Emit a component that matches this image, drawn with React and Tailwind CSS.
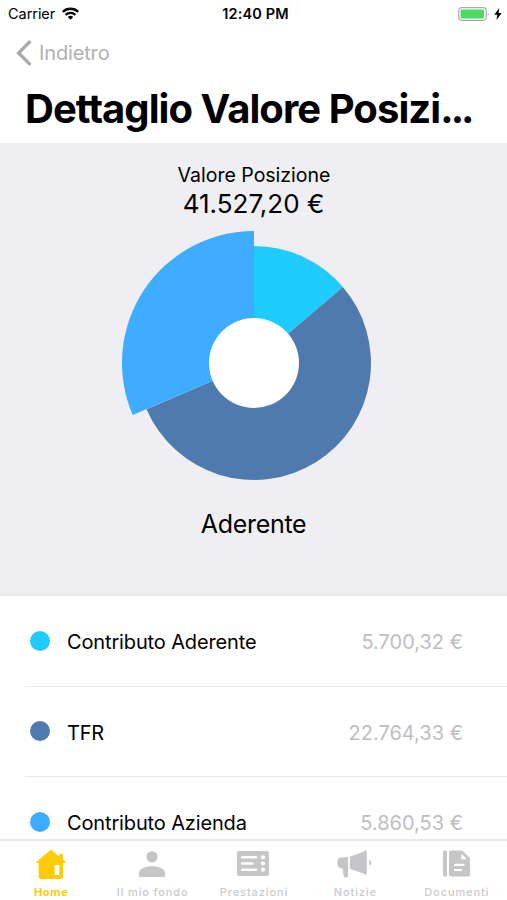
const CENTER = { x: 133, y: 133 };
const HOLE_RADIUS = 45;

const SLICES = [
  { id: 'aderente', color: '#1fcbff', value: 5700.32, radius: 117 },
  { id: 'tfr', color: '#4f7aad', value: 22764.33, radius: 117 },
  { id: 'azienda', color: '#3eacff', value: 13062.55, radius: 132 },
];

const ROWS = [
  { label: 'Contributo Aderente', amount: '5.700,32 €', dot: 'bg-[#1fcbff]', text: 'tracking-[-0.14px]' },
  { label: 'TFR', amount: '22.764,33 €', dot: 'bg-[#4f7aad]', text: 'tracking-[-0.2px]' },
  { label: 'Contributo Azienda', amount: '5.860,53 €', dot: 'bg-[#3eacff]', text: 'tracking-[-0.14px]' },
];

function slicePath(start, end, radius) {
  const point = (angle) =>
    `${CENTER.x + radius * Math.sin(angle)} ${CENTER.y - radius * Math.cos(angle)}`;
  const large = end - start > Math.PI ? 1 : 0;
  return `M${CENTER.x} ${CENTER.y}L${point(start)}A${radius} ${radius} 0 ${large} 1 ${point(end)}Z`;
}

function DonutChart() {
  const total = SLICES.reduce((sum, s) => sum + s.value, 0);
  let angle = 0;

  return (
    <svg width="266" height="266" viewBox="0 0 266 266" className="ml-[121px] block">
      {SLICES.map((slice) => {
        const start = angle;
        angle += (slice.value / total) * Math.PI * 2;
        return <path key={slice.id} d={slicePath(start, angle, slice.radius)} fill={slice.color} />;
      })}
      <circle cx={CENTER.x} cy={CENTER.y} r={HOLE_RADIUS} fill="#fff" />
    </svg>
  );
}

function StatusBar() {
  return (
    <div className="grid h-7 grid-cols-3 items-center pr-[5px] pl-2 text-[14.5px] text-black">
      <div className="flex items-center gap-[7px]">
        <span className="tracking-[-0.05px]">Carrier</span>
        <svg width="17" height="13" viewBox="0 0 17 13" fill="none" stroke="#000" strokeWidth="2.3" className="mb-0.5">
          <path d="M.8 4.9C5 .7 12 .7 16.2 4.9" />
          <path d="M3.6 7.8C6.4 5.2 10.6 5.2 13.4 7.8" />
          <path d="M5.8 9.9C7.3 8.5 9.7 8.5 11.2 9.9L8.5 12.7Z" fill="#000" stroke="none" />
        </svg>
      </div>
      <span className="pl-px text-center font-semibold tracking-[0.15px] whitespace-nowrap">12:40 PM</span>
      <div className="flex items-center justify-end gap-1 pb-px">
        <svg width="32" height="14" viewBox="0 0 32 14">
          <rect x=".7" y=".7" width="27.6" height="12.6" rx="3.2" fill="#fff" stroke="#a9a9ab" strokeWidth="1.2" />
          <rect x="2.6" y="2.6" width="23.4" height="8.8" rx="1.2" fill="#4cd964" />
          <path d="M29.8 4.8Q31.6 7 29.8 9.2Z" fill="#a9a9ab" />
        </svg>
        <svg width="8" height="12" viewBox="0 0 8 12">
          <path d="M5.2 0L.3 6.7H3.3L2.4 12L7.7 4.9H4.6Z" fill="#000" />
        </svg>
      </div>
    </div>
  );
}

function Header() {
  return (
    <header className="h-[143px] bg-white">
      <StatusBar />
      <button className="mt-3 ml-4 flex h-[26px] items-center gap-[7px] text-[20px] text-[#b0b0b3]">
        <svg width="16" height="26" viewBox="0 0 16 26" fill="none" stroke="#a9a9ac" strokeWidth="3.3">
          <path d="M14.4 1.2L2.6 13L14.4 24.8" />
        </svg>
        <span className="tracking-[-0.15px]">Indietro</span>
      </button>
      <h1 className="mt-[18px] ml-[25px] text-[40px] leading-[50px] font-bold tracking-[-0.94px] whitespace-nowrap text-black">
        Dettaglio Valore Posizi<span className="tracking-[-2.9px]">...</span>
      </h1>
    </header>
  );
}

function HomeIcon() {
  return (
    <svg width="30" height="30" viewBox="0 0 30 30" fill="#fecb08">
      <path
        fillRule="evenodd"
        d="M15 .5L23.2 7.4V5.3Q23.2 4.5 24 4.5H26Q26.8 4.5 26.8 5.3V10.6L29.4 12.8Q30 14 28.4 14H27V27.8Q27 30 24.8 30H5Q2.6 30 2.6 27.8V14H1.4Q0 14 .6 12.8ZM18.6 16V26H23.4V16Z"
      />
    </svg>
  );
}

function PersonIcon() {
  return (
    <svg width="26" height="26" viewBox="0 0 26 26" fill="#c6c6c9">
      <circle cx="13" cy="5.8" r="5.6" />
      <path d="M0 26V22C0 17.6 6.4 15.2 13 15.2S26 17.6 26 22V26Z" />
    </svg>
  );
}

function CardIcon() {
  return (
    <svg width="32" height="25" viewBox="0 0 32 25">
      <rect width="32" height="25" rx="2" fill="#c6c6c9" />
      <path d="M5 6.3H19M5 12.5H15.5M5 18.7H19" stroke="#fff" strokeWidth="2.4" strokeLinecap="round" />
      <g fill="#fff">
        <circle cx="26" cy="6.3" r="2.1" />
        <circle cx="26" cy="12.5" r="2.1" />
        <circle cx="26" cy="18.7" r="2.1" />
      </g>
    </svg>
  );
}

function MegaphoneIcon() {
  return (
    <svg width="35" height="28" viewBox="0 0 35 28" fill="#c6c6c9">
      <path d="M11 7V26Q11 27.4 9.6 27.4H8Q7 27.4 6.8 26.2L5.6 18.6H4Q.3 18 .3 12.8T4 7.6Z" />
      <path d="M12.8 6.8L27 1.6Q27.2 .6 28.4 .6Q29.8 .6 29.8 2V23.4Q29.8 24.8 28.4 24.8Q27.2 24.8 27 23.8L12.8 18.8Z" />
      <path d="M32.2 9.8Q34.6 10.6 34.6 12.7T32.2 15.6Z" />
    </svg>
  );
}

function DocumentIcon() {
  return (
    <svg width="27" height="27" viewBox="0 0 27 27" fill="#c6c6c9">
      <path d="M2 .4H4V26.6H2Q0 26.6 0 24.6V2.4Q0 .4 2 .4Z" />
      <path d="M8 .4H19.2L27 8.2V24.6Q27 26.6 25 26.6H8Q6 26.6 6 24.6V2.4Q6 .4 8 .4Z" />
      <path d="M18.3 3.5V9.2H24Z" fill="#fff" />
      <path d="M12 14.8H20.6M12 20H18" stroke="#fff" strokeWidth="2.2" strokeLinecap="round" />
    </svg>
  );
}

const TABS = [
  { label: 'Home', Icon: HomeIcon, text: 'font-bold text-[#fecb08] tracking-[0.75px]' },
  { label: 'Il mio fondo', Icon: PersonIcon, text: 'font-medium text-[#c9c9cc] tracking-[0.85px]' },
  { label: 'Prestazioni', Icon: CardIcon, text: 'font-medium text-[#c9c9cc] tracking-[0.9px]' },
  { label: 'Notizie', Icon: MegaphoneIcon, text: 'font-medium text-[#c9c9cc] tracking-[0.9px]' },
  { label: 'Documenti', Icon: DocumentIcon, text: 'font-medium text-[#c9c9cc] tracking-[0.9px]' },
];

function TabBar() {
  return (
    <nav className="grid h-[61px] grid-cols-5 border-t-2 border-[#e9e9eb] bg-white">
      {TABS.map(({ label, Icon, text }) => (
        <div key={label} className="flex flex-col items-center">
          <div className="flex h-[45px] items-center justify-center">
            <Icon />
          </div>
          <span className={`pl-px text-[11px] leading-[13px] whitespace-nowrap ${text}`}>{label}</span>
        </div>
      ))}
    </nav>
  );
}

export default function App() {
  return (
    <div className="flex h-[900px] w-[507px] flex-col overflow-hidden bg-white font-[Inter,sans-serif]">
      <Header />

      <section className="h-[453px] shrink-0 border-b-2 border-[#e7e7e9] bg-[#efeef3] pt-[19px] text-black">
        <p className="pl-px text-center text-[19.5px] leading-[26px]">Valore Posizione</p>
        <p className="text-center text-[26px] leading-[32px]">41.527,20 €</p>
        <div className="mt-2.5">
          <DonutChart />
        </div>
        <p className="mt-[13px] text-center text-[25px] leading-[30px] tracking-[-0.3px]">Aderente</p>
      </section>

      <ul className="min-h-0 flex-1 overflow-hidden">
        {ROWS.map((row) => (
          <li key={row.label} className="ml-[25px] flex h-[90.5px] items-center border-b border-[#e9e9eb] pr-11 pl-[5px]">
            <span className={`size-5 rounded-full ${row.dot}`} />
            <span className={`ml-[17px] flex-1 pt-[2.5px] text-[20px] text-black ${row.text}`}>{row.label}</span>
            <span className="pt-[2.5px] text-[20px] text-[#bebec1]">{row.amount}</span>
          </li>
        ))}
      </ul>

      <TabBar />
    </div>
  );
}
